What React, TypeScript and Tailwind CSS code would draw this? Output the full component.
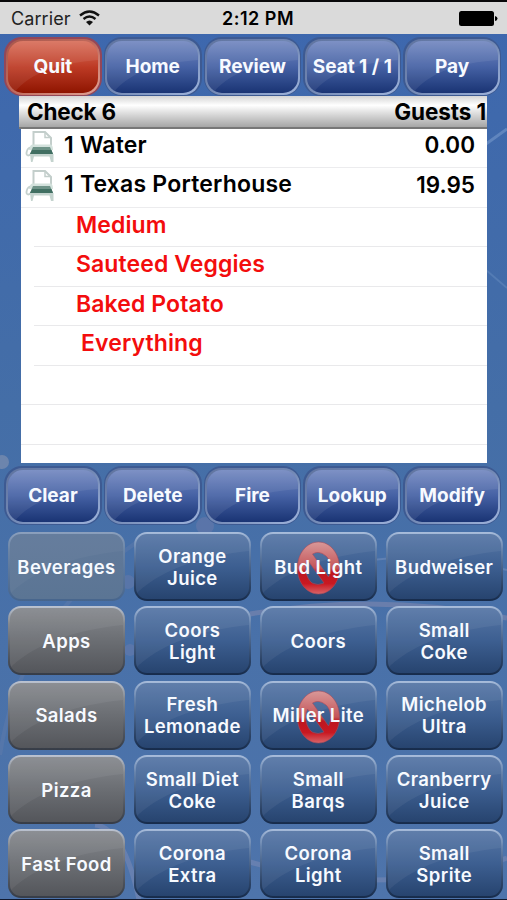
import React from 'react';

type Tone = 'red' | 'navy' | 'steel' | 'grey' | 'faded';

const topActions: { label: string; tone: Tone }[] = [
  { label: 'Quit', tone: 'red' },
  { label: 'Home', tone: 'navy' },
  { label: 'Review', tone: 'navy' },
  { label: 'Seat 1 / 1', tone: 'navy' },
  { label: 'Pay', tone: 'navy' },
];

const editActions: { label: string; tone: Tone }[] = [
  { label: 'Clear', tone: 'navy' },
  { label: 'Delete', tone: 'navy' },
  { label: 'Fire', tone: 'navy' },
  { label: 'Lookup', tone: 'navy' },
  { label: 'Modify', tone: 'navy' },
];

const menu: { lines: string[]; tone: Tone; out?: boolean }[] = [
  { lines: ['Beverages'], tone: 'faded' },
  { lines: ['Orange', 'Juice'], tone: 'steel' },
  { lines: ['Bud Light'], tone: 'steel', out: true },
  { lines: ['Budweiser'], tone: 'steel' },
  { lines: ['Apps'], tone: 'grey' },
  { lines: ['Coors', 'Light'], tone: 'steel' },
  { lines: ['Coors'], tone: 'steel' },
  { lines: ['Small', 'Coke'], tone: 'steel' },
  { lines: ['Salads'], tone: 'grey' },
  { lines: ['Fresh', 'Lemonade'], tone: 'steel' },
  { lines: ['Miller Lite'], tone: 'steel', out: true },
  { lines: ['Michelob', 'Ultra'], tone: 'steel' },
  { lines: ['Pizza'], tone: 'grey' },
  { lines: ['Small Diet', 'Coke'], tone: 'steel' },
  { lines: ['Small', 'Barqs'], tone: 'steel' },
  { lines: ['Cranberry', 'Juice'], tone: 'steel' },
  { lines: ['Fast Food'], tone: 'grey' },
  { lines: ['Corona', 'Extra'], tone: 'steel' },
  { lines: ['Corona', 'Light'], tone: 'steel' },
  { lines: ['Small', 'Sprite'], tone: 'steel' },
];

const items = [
  { name: '1 Water', price: '0.00', height: 'h-[39px]' },
  { name: '1 Texas Porterhouse', price: '19.95', height: 'h-[39.5px]' },
];

const modifiers = [
  { name: 'Medium', pad: 'pl-[55px]' },
  { name: 'Sauteed Veggies', pad: 'pl-[55px]' },
  { name: 'Baked Potato', pad: 'pl-[55px]' },
  { name: 'Everything', pad: 'pl-[60px]' },
];

const fills: Record<Tone, string> = {
  red: 'bg-linear-to-b from-[#d9705c] via-[#bd3a24] via-50% to-[#8f1400]',
  navy: 'bg-linear-to-b from-[#7489c1] via-[#4561a4] via-50% to-[#1a3474]',
  steel: 'bg-linear-to-b from-[#5777a6] via-[#3d5f91] via-50% to-[#27446f]',
  grey: 'bg-linear-to-b from-[#86898e] via-[#6b6e73] via-50% to-[#54565b]',
  faded: 'bg-linear-to-b from-[#61799a] to-[#5b7594]',
};

const rims: Record<Tone, string> = {
  red: 'bg-linear-to-br from-[#a8574c] via-[#c06a5c] to-[#e0a195]',
  navy: 'bg-linear-to-br from-[#5f739f] via-[#7389b5] to-[#9fb4dc]',
  steel: 'bg-linear-to-b from-[#a9bddb] via-[#6683ac] via-25% to-[#162b4b]',
  grey: 'bg-linear-to-b from-[#bcc4d2] via-[#85898f] via-25% to-[#363c47]',
  faded: 'bg-linear-to-b from-[#8ca0bd] via-[#6c85a6] via-25% to-[#47658c]',
};

function Backdrop() {
  return (
    <svg className="absolute inset-0 -z-10" width="507" height="900" viewBox="0 0 507 900" fill="none">
      <defs>
        <linearGradient id="sky" x1="0" y1="0" x2="0" y2="1">
          <stop offset="0" stopColor="#3d67ae" />
          <stop offset=".45" stopColor="#446ea7" />
          <stop offset="1" stopColor="#4e74ab" />
        </linearGradient>
      </defs>
      <rect width="507" height="900" fill="url(#sky)" />
      <path d="M486 144L507 129" stroke="#7195c8" strokeWidth="3" opacity=".65" />
      <path d="M486 270L507 288" stroke="#668bc0" strokeWidth="2" opacity=".5" />
      <circle cx="2" cy="462" r="7" fill="#7d8eaf" opacity=".7" />
      <circle cx="205" cy="526" r="9" fill="#797eab" opacity=".4" />
      <circle cx="128" cy="582" r="7" fill="#787ea8" opacity=".35" />
      <circle cx="130" cy="650" r="6" fill="#7b82ad" opacity=".35" />
      <path d="M250 614Q380 592 507 618" stroke="#8a8baf" strokeWidth="5" opacity=".5" />
      <path d="M372 560Q440 552 507 570" stroke="#7992bd" strokeWidth="2" opacity=".5" />
      <path d="M95 825Q125 828 140 905" stroke="#7f8bb5" strokeWidth="5" opacity=".5" />
      <path d="M250 862Q380 900 507 858" stroke="#7f8bb5" strokeWidth="5" opacity=".5" />
      <path d="M0 755Q20 620 140 540" stroke="#6d80ad" strokeWidth="4" opacity=".3" />
    </svg>
  );
}

function BarButton({ label, tone }: { label: string; tone: Tone }) {
  const hot = tone === 'red';
  return (
    <button className={`flex h-[59px] rounded-[18px] p-[1.5px] ${hot ? 'bg-[#944758]' : 'bg-[#3d5a92]'}`}>
      <span className={`flex flex-1 rounded-[16.5px] p-[2px] ${rims[tone]}`}>
        <span className={`relative flex flex-1 items-center justify-center overflow-hidden rounded-[15px] ${fills[tone]}`}>
          <svg className="absolute inset-0 size-full" viewBox="0 0 90 52" preserveAspectRatio="none">
            <path d="M0 0H90V19C52 22 22 31 6 52H0Z" fill="#fff" opacity=".07" />
          </svg>
          <span className="relative whitespace-nowrap text-[19px] font-bold leading-none">{label}</span>
        </span>
      </span>
    </button>
  );
}

function ButtonBar({ actions }: { actions: { label: string; tone: Tone }[] }) {
  return (
    <div className="grid grid-cols-5 gap-x-[2px] pl-[4px] pr-[6px]">
      {actions.map((a) => (
        <BarButton key={a.label} {...a} />
      ))}
    </div>
  );
}

function SoldOut() {
  return (
    <svg className="absolute left-[34px] top-[7px]" width="45" height="54" viewBox="0 0 45 54">
      <defs>
        <linearGradient id="ban" x1="0" y1="0" x2="0" y2="1">
          <stop offset="0" stopColor="#d99898" />
          <stop offset=".5" stopColor="#c45559" />
          <stop offset=".58" stopColor="#bd1720" />
          <stop offset=".8" stopColor="#c91821" />
          <stop offset="1" stopColor="#d86468" />
        </linearGradient>
      </defs>
      <path
        fillRule="evenodd"
        fill="url(#ban)"
        stroke="#a84c5c"
        strokeWidth=".6"
        d="M22.500 1C34 1 43.500 12 43.500 27S34 53 22.500 53S1.500 42 1.500 27S11 1 22.500 1ZM16.500 13L32.500 36C36 30 35 19 30 15Q23 9 16.500 13ZM11.500 19C8 27 10 37 16 42Q22 45 28 42Z"
      />
    </svg>
  );
}

function MenuButton({ lines, tone, out }: { lines: string[]; tone: Tone; out?: boolean }) {
  return (
    <button className={`flex rounded-[13px] p-[2px] ${rims[tone]}`}>
      <span
        className={`relative flex h-full flex-1 flex-col items-center justify-center overflow-hidden rounded-[11px] pt-[0.5px] text-[18.5px] font-semibold leading-[22px] tracking-[0.4px] ${fills[tone]}`}
      >
        <svg className="absolute inset-0 size-full" viewBox="0 0 113 65" preserveAspectRatio="none">
          <path d="M0 0H113V17C65 22 28 35 3 57L0 60Z" fill="#fff" opacity={tone === 'faded' ? '.03' : '.055'} />
        </svg>
        {out && <SoldOut />}
        {lines.map((l) => (
          <span key={l} className="relative whitespace-nowrap">
            {l}
          </span>
        ))}
      </span>
    </button>
  );
}

function Printer() {
  return (
    <svg width="30" height="34" viewBox="0 0 30 34" fill="none">
      <path d="M8.500 17V3H20L26 9V17" fill="#fff" stroke="#c3cecb" strokeWidth="2" />
      <path d="M20 3V8.500H26" stroke="#c3cecb" strokeWidth="1.500" />
      <path d="M7 15.500H26Q28 16.500 28 21H4Q4 17 7 15.500Z" fill="#d3e1dc" />
      <path d="M5 18.500Q1.500 20 1.500 25Q2.500 28 6 25" stroke="#c5d1ce" strokeWidth="1.800" />
      <path d="M8 18H25L28 25H5Z" fill="#6f9388" />
      <path d="M7 21H26.500L28 25H5Z" fill="#416f62" />
      <path d="M5 25H28.500V33H26L24.500 27.500H9L7.500 33H6Z" fill="#c4d3ce" />
    </svg>
  );
}

function CheckList() {
  return (
    <section className="ml-[19px] mr-[20px] flex h-[367px] flex-col text-black">
      <header className="flex h-[33px] shrink-0 items-center justify-between border-b-2 border-[#777] bg-linear-to-b from-[#d5d5d5] via-white via-30% to-[#a6a6a6] pl-[8px] pr-[1px] pt-[2px] text-[22.5px] font-bold leading-none">
        <span className="tracking-[-0.2px]">Check 6</span>
        <span className="tracking-[-0.1px]">Guests 1</span>
      </header>
      <div className="ml-[2px] flex-1 overflow-hidden bg-white text-[23px] font-semibold leading-none">
        {items.map((it) => (
          <div key={it.name} className={`flex ${it.height} items-center border-b border-[#ececee] pl-[4px] pr-[12px] pb-[5px]`}>
            <Printer />
            <span className="ml-[9px] flex-1 tracking-[0.2px]">{it.name}</span>
            <span className="text-[22.5px]">{it.price}</span>
          </div>
        ))}
        {modifiers.map((m) => (
          <div key={m.name} className="flex h-[39.5px] flex-col">
            <span className={`flex flex-1 items-center pb-[3px] tracking-[0.1px] text-[#f30d0d] ${m.pad}`}>{m.name}</span>
            <i className="ml-[13px] h-px bg-[#e9e9eb]" />
          </div>
        ))}
        <div className="h-[39.5px] border-b border-[#e9e9eb]" />
        <div className="h-[39.5px] border-b border-[#e9e9eb]" />
      </div>
    </section>
  );
}

function StatusBar() {
  return (
    <div className="grid h-[34px] grid-cols-3 items-center border-t-2 border-[#08080a] bg-[#dadada] pl-[11px] pr-[9px] text-[18px] leading-none text-black">
      <div className="flex items-center gap-[8px] text-[#222]">
        <span className="pt-px tracking-[0.1px]">Carrier</span>
        <svg width="21" height="16" viewBox="0 0 21 16" fill="none" stroke="#111" strokeWidth="2.300">
          <path d="M1 5.500Q10.500 -2.500 20 5.500" />
          <path d="M4.500 9Q10.500 4 16.500 9" />
          <path d="M7 12Q10.500 9 14 12L10.500 15.500Z" fill="#111" stroke="none" />
        </svg>
      </div>
      <span className="pl-[7px] pt-px text-center font-semibold tracking-[0.5px]">2:12 PM</span>
      <svg className="justify-self-end" width="39" height="15" viewBox="0 0 39 15">
        <rect x="0" y="0" width="35" height="15" rx="2.500" />
        <path d="M36 5Q38.500 5.500 38.500 7.500T36 10Z" />
      </svg>
    </div>
  );
}

export default function App() {
  return (
    <main className="relative isolate flex h-[900px] w-[507px] flex-col overflow-hidden border-b border-[#101a30] font-['Inter','Liberation_Sans',sans-serif] text-[#f7faff]">
      <Backdrop />
      <StatusBar />
      <div className="pt-[3px]">
        <ButtonBar actions={topActions} />
      </div>
      <CheckList />
      <div className="pt-[3px]">
        <ButtonBar actions={editActions} />
      </div>
      <div className="ml-[8px] mr-[4px] mt-[7px] grid auto-rows-[69px] grid-cols-[117px_117px_117px_117px] gap-x-[8.9px] gap-y-[5.25px]">
        {menu.map((m) => (
          <MenuButton key={m.lines.join(' ')} {...m} />
        ))}
      </div>
    </main>
  );
}
